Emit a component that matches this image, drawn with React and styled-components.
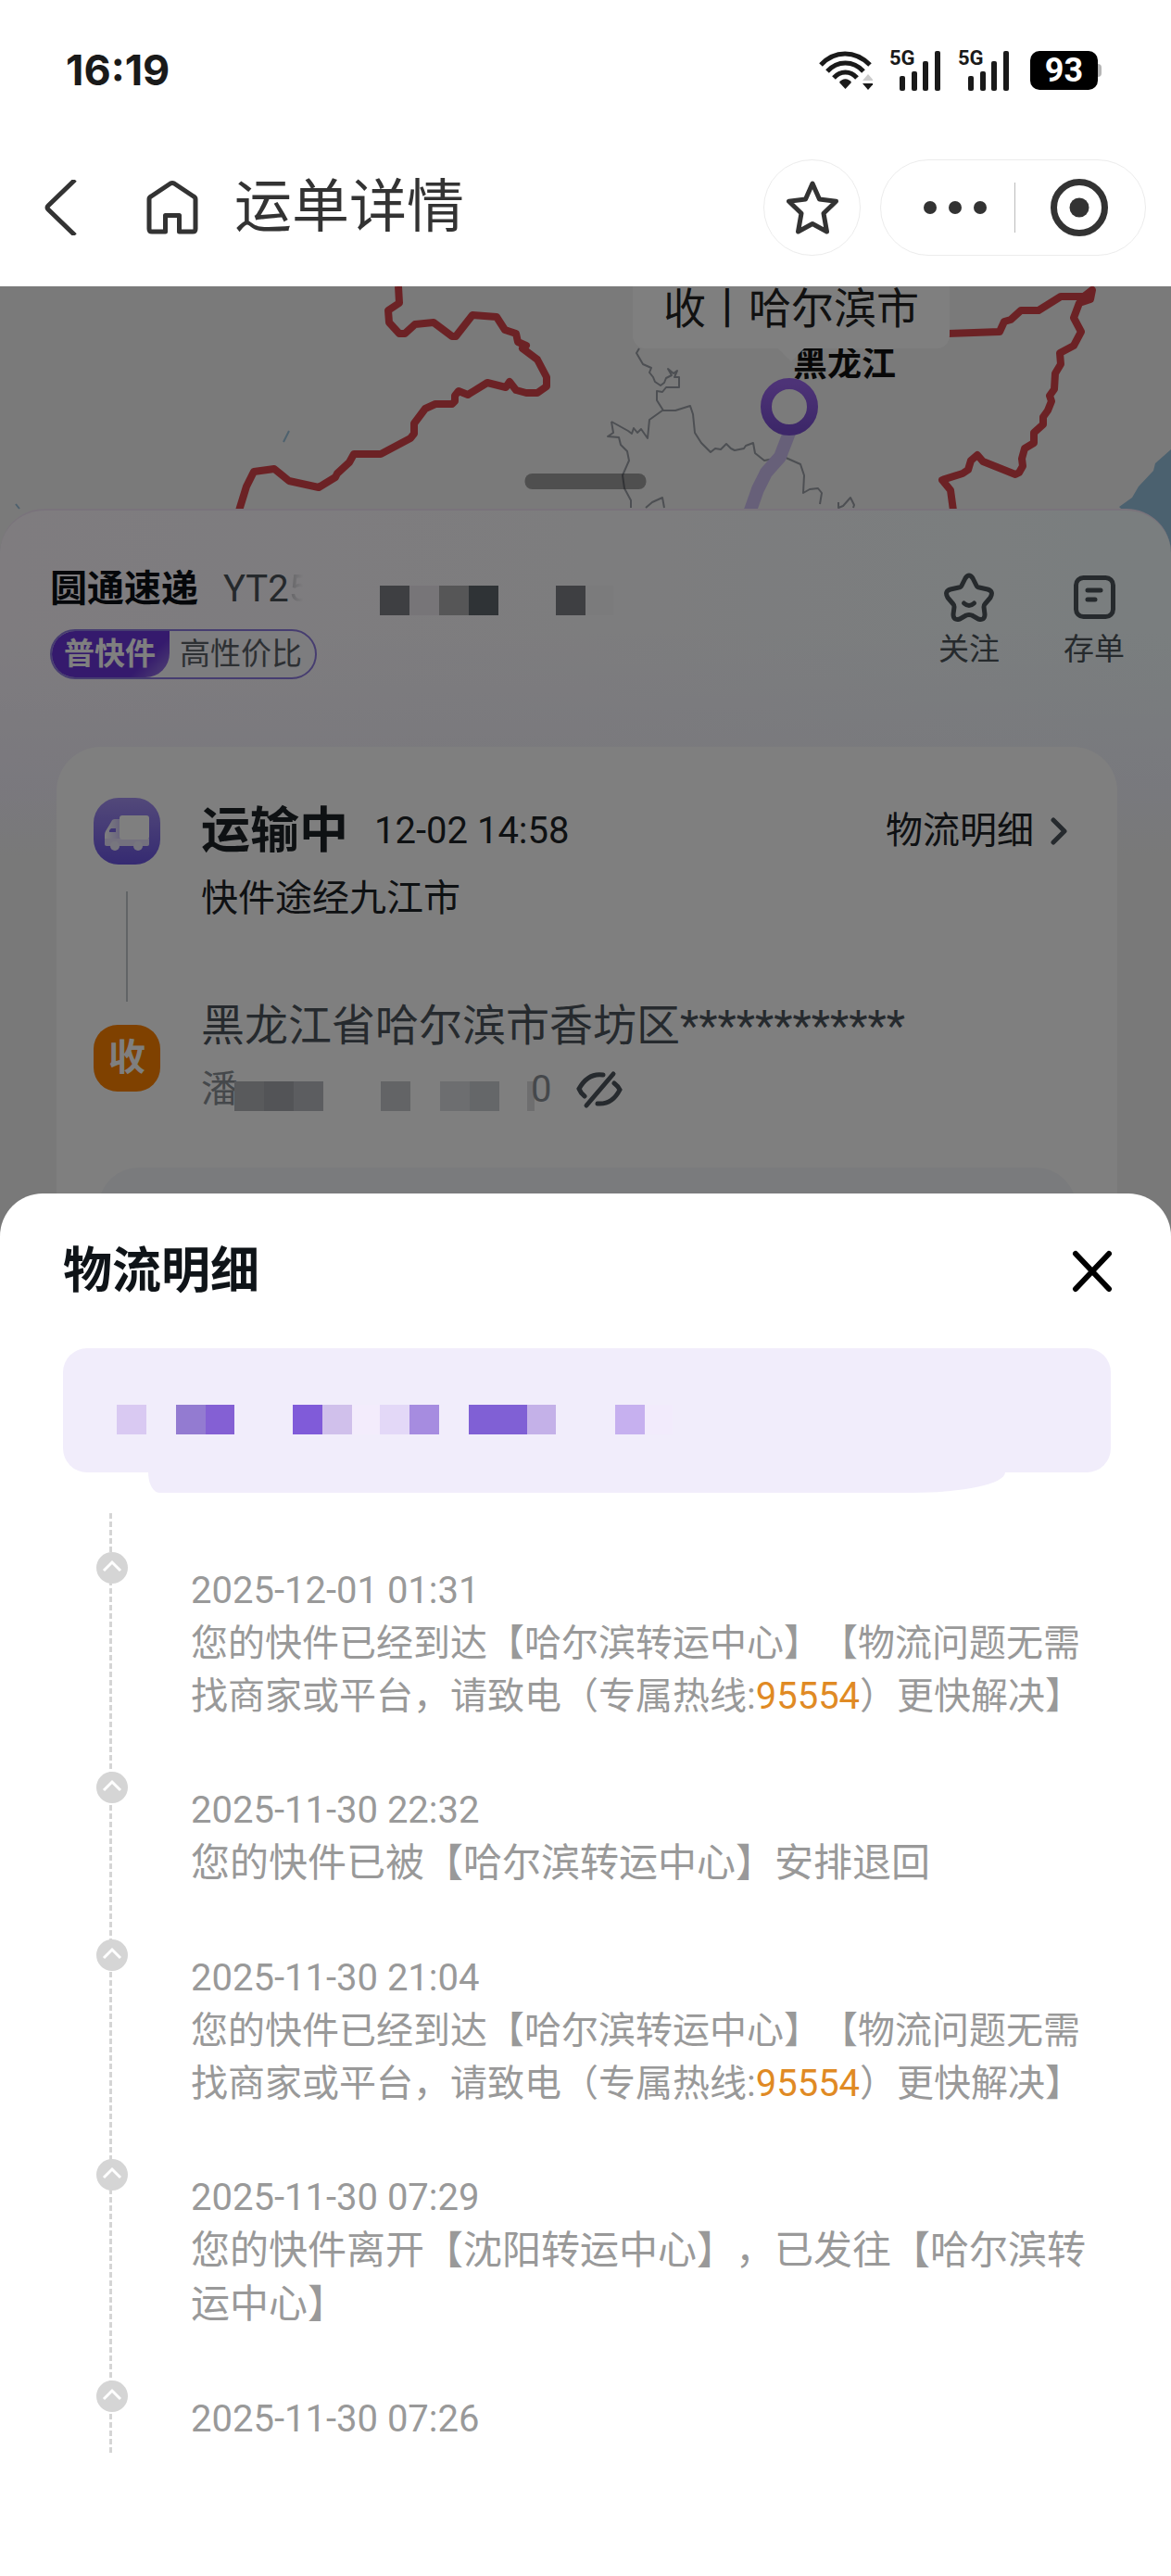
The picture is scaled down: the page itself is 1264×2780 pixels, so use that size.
// App.jsx
import React, { useState } from 'react';
import styled, { createGlobalStyle } from 'styled-components';

const GlobalStyle = createGlobalStyle`
  * {
    box-sizing: border-box;
  }

  body {
    margin: 0;
    background: #fff;
    font-family: Roboto, "Noto Sans CJK SC", sans-serif;
    text-spacing-trim: space-all;
  }

  button {
    padding: 0;
    border: none;
    background: none;
    color: inherit;
    font: inherit;
    cursor: pointer;
  }

  svg {
    display: block;
    flex: none;
  }
`;

const Page = styled.div`
  display: flex;
  flex-direction: column;
  min-height: 100vh;
`;

// Status bar
const StatusBar = styled.div`
  display: flex;
  align-items: center;
  justify-content: space-between;
  padding: 46px 75px 26px 71px;
  color: #1a1a1a;
`;

const Clock = styled.time`
  font-family: Inter, sans-serif;
  font-size: 45px;
  font-weight: 700;
  line-height: 60px;
`;

const StatusIcons = styled.div`
  display: flex;
  align-items: center;
  gap: 18px;
`;

const Signal = styled.div`
  display: flex;
  position: relative;
  padding-left: 10px;
`;

const NetworkType = styled.span`
  position: absolute;
  top: -4px;
  left: 0;
  font-size: 22px;
  font-weight: 700;
  line-height: 26px;
`;

const Battery = styled.div`
  display: flex;
  align-items: center;
  margin-left: 4px;

  &::after {
    content: '';
    width: 4px;
    height: 14px;
    border-radius: 0 4px 4px 0;
    background: #b5b5b5;
  }
`;

const BatteryLevel = styled.span`
  width: 73px;
  border-radius: 10px;
  background: #000;
  color: #fff;
  font-size: 36px;
  font-weight: 700;
  line-height: 42px;
  text-align: center;
`;

// Navigation bar
const NavBar = styled.header`
  display: flex;
  align-items: center;
  padding: 40px 27px 33px 48px;
  color: #333;
`;

const HomeButton = styled.button`
  margin: 0 39px 0 74px;
`;

const PageTitle = styled.h1`
  flex: 1;
  margin: 0;
  font-size: 62px;
  font-weight: 400;
  line-height: 104px;
`;

const StarButton = styled.button`
  display: flex;
  align-items: center;
  justify-content: center;
  width: 105px;
  height: 104px;
  margin-right: 21px;
  border: 1px solid #ececec;
  border-radius: 52px;
`;

const Capsule = styled.div`
  display: flex;
  align-items: center;
  justify-content: space-between;
  width: 287px;
  height: 104px;
  padding: 0 40px 0 46px;
  border: 1px solid #ececec;
  border-radius: 52px;
`;

const CapsuleDivider = styled.span`
  width: 1px;
  height: 54px;
  margin-right: 8px;
  background: #bbb;
`;

// Dimmed page behind the bottom sheet
const Stage = styled.main`
  position: relative;
  overflow: hidden;
`;

const Backdrop = styled.div`
  position: absolute;
  inset: 0;
  background: rgba(0, 0, 0, 0.5);
`;

const Map = styled.section`
  position: relative;
  height: 292px;
  overflow: hidden;
  background: #f4f4f4;
`;

const Callout = styled.div`
  position: absolute;
  top: 0;
  left: 683px;
  padding: 0 33px 19px;
  border-radius: 0 0 14px 14px;
  background: #fff;
  color: #222;
  font-size: 46px;
  line-height: 48px;

  &::after {
    content: '';
    position: absolute;
    top: 100%;
    left: 50%;
    border: 14px solid transparent;
    border-top-color: #fff;
    transform: translateX(-50%);
  }
`;

const ProvinceName = styled.span`
  position: absolute;
  top: 61px;
  left: 856px;
  color: #111;
  font-size: 37px;
  font-weight: 700;
  line-height: 48px;
`;

const DragHandle = styled.div`
  position: absolute;
  top: 202px;
  left: 50%;
  width: 131px;
  height: 17px;
  border-radius: 8px;
  background: rgba(0, 0, 0, 0.35);
  transform: translateX(-50%);
`;

const Waybill = styled.section`
  position: relative;
  margin-top: -52px;
  border-top: 2px solid #f3e6f7;
  border-radius: 48px 48px 0 0;
  background:
    linear-gradient(to bottom, rgba(242, 242, 242, 0) 130px, rgba(240, 238, 250, 0.7) 300px, #f2f2f2 378px),
    linear-gradient(to right, #fef9ff, #fbfafd 50%, #f4fdfe);
`;

const WaybillHead = styled.div`
  display: flex;
  align-items: flex-start;
  justify-content: space-between;
  padding: 61px 50px 73px 54px;
`;

const CarrierRow = styled.div`
  display: flex;
  align-items: flex-start;
  margin-bottom: 15px;
  line-height: 48px;
`;

const Carrier = styled.h2`
  margin: 0 27px 0 0;
  color: #0a0f14;
  font-size: 40px;
  font-weight: 700;
`;

const WaybillNo = styled.span`
  margin-right: 76px;
  color: #4a5258;
  font-size: 40px;
`;

const FadedDigit = styled.span`
  opacity: 0.3;
  mask-image: linear-gradient(to right, #000, transparent 70%);
`;

const Tag = styled.div`
  display: flex;
  width: fit-content;
  overflow: hidden;
  border: 2px solid #8d7ae0;
  border-radius: 27px;
  background: #fbfaff;
  color: #5a6066;
  font-size: 33px;
  line-height: 50px;
`;

const TagName = styled.strong`
  padding: 0 15px 0 13px;
  border-radius: 0 0 26px 0;
  background: linear-gradient(135deg, #6a35da 75%, #a58ae8 100%);
  color: #fff;
  font-weight: 700;
`;

const TagNote = styled.span`
  padding: 0 14px 0 11px;
`;

const Actions = styled.div`
  display: flex;
  gap: 69px;
  margin-top: 5px;
`;

const ActionButton = styled.button`
  display: flex;
  flex-direction: column;
  align-items: center;
  gap: 10px;
  color: #4d555a;
  font-size: 33px;
  line-height: 40px;
`;

const Card = styled.article`
  margin: 0 58px 0 61px;
  padding: 55px 44px 0 40px;
  border-radius: 48px 48px 0 0;
  background: #fff;
`;

const Stop = styled.div`
  display: grid;
  grid-template-columns: 72px 1fr;
  column-gap: 44px;
  padding-right: 9px;
`;

const StopRail = styled.div`
  display: flex;
  flex-direction: column;
  align-items: center;

  &::after {
    content: '';
    display: ${(props) => (props.$line ? 'block' : 'none')};
    width: 2px;
    height: 119px;
    margin-top: 29px;
    background: #c3c8cd;
  }
`;

const ReceiveBadge = styled.span`
  width: 72px;
  margin-top: 25px;
  border-radius: 26px;
  background: #ff8200;
  color: #fff;
  font-size: 40px;
  font-weight: 700;
  line-height: 72px;
  text-align: center;
`;

const StateRow = styled.div`
  display: flex;
  align-items: center;
  margin-bottom: 13px;
  color: #1d2226;
  line-height: 72px;
`;

const State = styled.h3`
  margin: 0;
  font-size: 53px;
  font-weight: 700;
`;

const StateTime = styled.time`
  flex: 1;
  margin-left: 28px;
  font-size: 40px;
`;

const DetailLink = styled.a`
  display: flex;
  align-items: center;
  gap: 18px;
  color: inherit;
  font-size: 40px;
  text-decoration: none;
`;

const StateText = styled.p`
  margin: 0;
  color: #1d2226;
  font-size: 40px;
  line-height: 48px;
`;

const Address = styled.p`
  margin: 0 0 19px;
  color: #4d555c;
  font-size: 47px;
  line-height: 52px;
`;

const Receiver = styled.div`
  display: flex;
  align-items: center;
  color: #8b9197;
  font-size: 40px;
  line-height: 48px;

  button {
    margin-left: 27px;
    color: #4d555c;
  }
`;

const ExtraPanel = styled.div`
  height: 78px;
  margin: 60px 0 0 5px;
  border-radius: 44px 44px 0 0;
  background: #f5f7fa;
`;

// Bottom sheet with the tracking history
const Sheet = styled.section`
  position: relative;
  flex: 1;
  margin-top: -50px;
  border-radius: 46px 46px 0 0;
  background: #fff;
`;

const SheetHead = styled.div`
  display: flex;
  align-items: center;
  justify-content: space-between;
  padding: 49px 63px 48px 68px;
`;

const SheetTitle = styled.h2`
  margin: 0;
  color: #0f1418;
  font-size: 53px;
  font-weight: 700;
  line-height: 70px;
`;

const Notice = styled.div`
  position: relative;
  margin: 0 65px 44px 68px;
  padding: 61px 58px 41px;
  border-radius: 26px;
  background: #f1edfb;

  &::after {
    content: '';
    position: absolute;
    top: 100%;
    right: 114px;
    left: 92px;
    height: 22px;
    border-radius: 0 0 100px 12px / 0 0 22px 22px;
    background: inherit;
  }
`;

const History = styled.ol`
  margin: 0;
  padding: 42px 68px 0 104px;
  list-style: none;
  background: repeating-linear-gradient(to bottom, #d5d5d5 0 6px, transparent 6px 9px) 118px 0 / 3px 100% no-repeat;
`;

const Entry = styled.li`
  display: grid;
  grid-template-columns: 34px 1fr;
  column-gap: 68px;
  padding-bottom: 53px;

  &:last-child {
    padding-bottom: 8px;
  }
`;

const EntryBody = styled.div`
  padding-top: 14px;
  color: #999;
`;

const EntryTime = styled.time`
  display: block;
  font-size: 40px;
  line-height: 56px;
`;

const EntryText = styled.p`
  margin: 0;
  font-size: ${(props) => (props.$compact ? '40px' : '42px')};
  line-height: ${(props) => (props.$compact ? '57px' : '58px')};
`;

const Hotline = styled.a`
  color: #e08a24;
  text-decoration: none;
`;

const WifiIcon = () => (
  <svg width="58" height="42" viewBox="0 0 58 42" fill="none" stroke="#1a1a1a" strokeWidth="5">
    <path d="M2 15C17-1 39-1 55 15" />
    <path d="M9 22C20 10 37 10 48 22" />
    <path d="M16 29C23 21 34 21 41 29" />
    <path d="M22 34c3-5 10-5 13 0l-6.500 7z" fill="#1a1a1a" stroke="none" />
    <path d="M47 32l6-7 6 7z" fill="#ccc" stroke="none" />
    <path d="M47 35h12l-6 7z" fill="#1a1a1a" stroke="none" />
  </svg>
);

const SignalIcon = () => (
  <Signal>
    <NetworkType>5G</NetworkType>
    <svg width="46" height="44" viewBox="0 0 46 44" fill="#1a1a1a">
      <rect x="1" y="28" width="6" height="16" rx="2" />
      <rect x="14" y="23" width="6" height="21" rx="2" />
      <rect x="26" y="12" width="6" height="32" rx="2" />
      <rect x="39" y="1" width="6" height="43" rx="2" />
    </svg>
  </Signal>
);

const BackIcon = () => (
  <svg width="36" height="60" viewBox="0 0 36 60" fill="none" stroke="currentColor" strokeWidth="5">
    <path d="M33 0L4 28q-2 2 0 4L33 60" />
  </svg>
);

const HomeIcon = () => (
  <svg width="56" height="60" viewBox="0 0 56 60" fill="none" stroke="currentColor" strokeWidth="5" strokeLinejoin="round">
    <path d="M20.500 56H6q-3 0-3-3V21q0-2 2-3L26 4q2-1 4 0l21 14q2 1 2 3v32q0 3-3 3H35.500V38.500h-15z" />
    <path d="M24 56h8" stroke="#fff" strokeWidth="6" />
  </svg>
);

const StarIcon = () => (
  <svg width="56" height="60" viewBox="0 0 56 60" fill="none" stroke="currentColor" strokeWidth="5" strokeLinejoin="round">
    <path d="M28 4l7.500 17 18 2.200-13.500 13L43.500 56 28 47.500 12.500 56 16 36.200 2.500 23.200l18-2.200z" />
  </svg>
);

const MoreIcon = () => (
  <svg width="68" height="14" viewBox="0 0 68 14" fill="currentColor">
    <circle cx="7" cy="7" r="7" />
    <circle cx="34" cy="7" r="7" />
    <circle cx="61" cy="7" r="7" />
  </svg>
);

const TargetIcon = () => (
  <svg width="62" height="62" viewBox="0 0 62 62">
    <circle cx="31" cy="31" r="27.500" fill="none" stroke="currentColor" strokeWidth="7" />
    <circle cx="31" cy="31" r="10.500" fill="currentColor" />
  </svg>
);

const SmileStarIcon = () => (
  <svg width="54" height="54" viewBox="0 0 54 54" fill="none" stroke="currentColor" strokeWidth="5" strokeLinecap="round" strokeLinejoin="round">
    <path d="M23 7q4-6 8 0l4 8q1 2 3 2l9 2q7 2 3 9l-6 7q-1 1-1 3l1 8q0 7-7 5l-7-4q-3-1-6 0l-7 4q-7 2-7-5l1-8q0-2-1-3l-6-7q-4-7 3-9l9-2q2 0 3-2z" />
    <path d="M21.500 34q5.500 5 11 0" />
  </svg>
);

const SaveIcon = () => (
  <svg width="54" height="54" viewBox="0 0 54 54" fill="none" stroke="currentColor" strokeWidth="5" strokeLinecap="round">
    <rect x="7.500" y="6.500" width="40" height="42" rx="8" />
    <path d="M20 20h14M20 30h8" />
  </svg>
);

const TruckIcon = () => (
  <svg width="72" height="72" viewBox="0 0 72 72">
    <defs>
      <linearGradient id="truckFill" x1="0" y1="0" x2="0" y2="1">
        <stop offset="0" stopColor="#a592f4" />
        <stop offset="1" stopColor="#6b55e4" />
      </linearGradient>
      <linearGradient id="cabFill" x1="0" y1="0" x2="1" y2="0">
        <stop offset="0" stopColor="#fff" />
        <stop offset="1" stopColor="#cfc6fa" />
      </linearGradient>
    </defs>
    <rect width="72" height="72" rx="27" fill="url(#truckFill)" />
    <path d="M28 23h-5q-3 0-4 3l-6 10q-1 2-1 4v9q0 2 2 2h15z" fill="url(#cabFill)" />
    <path d="M17 35l2-2h5v4h-7z" fill="#7f6aea" />
    <path d="M12 44h48v6q0 2-2 2H14q-2 0-2-2z" fill="#e8e3fc" />
    <rect x="28" y="19" width="32" height="26" rx="3" fill="#fff" />
    <circle cx="23" cy="52" r="5" fill="#efecfd" />
    <circle cx="48" cy="52" r="5" fill="#efecfd" />
  </svg>
);

const ChevronIcon = () => (
  <svg width="19" height="30" viewBox="0 0 19 30" fill="none" stroke="#4d555c" strokeWidth="5" strokeLinecap="round" strokeLinejoin="round">
    <path d="M3 3l12 12L3 27" />
  </svg>
);

const HiddenIcon = () => (
  <svg width="50" height="42" viewBox="0 0 50 42" fill="none" stroke="currentColor" strokeWidth="5" strokeLinecap="round">
    <path d="M29 5C16 3 8 11 3 20q2 5 6 8" />
    <path d="M11 38L40 4" />
    <path d="M41 14q4 3 6 7c-5 10-13 16-24 15" />
  </svg>
);

const CloseIcon = () => (
  <svg width="44" height="46" viewBox="0 0 44 46" fill="none" stroke="#000" strokeWidth="6" strokeLinecap="round">
    <path d="M4 4l36 38M40 4L4 42" />
  </svg>
);

const EntryIcon = () => (
  <svg width="34" height="34" viewBox="0 0 34 34" fill="none">
    <circle cx="17" cy="17" r="17" fill="#d5d5d5" />
    <path d="M8 20l9-9 9 9" stroke="#fff" strokeWidth="3" />
  </svg>
);

// Pixelated cells over private data: [x, width, colour]
const numberCells = [
  [0, 32, '#7d7e85'], [32, 32, '#efebf0'], [64, 32, '#acacaf'], [96, 32, '#5f666c'],
  [190, 32, '#7d7e84'], [222, 30, '#f7f6f9'],
];
const receiverCells = [
  [0, 32, '#b2b4b8'], [32, 32, '#a7a9ae'], [64, 32, '#b8bac0'],
  [158, 32, '#c6c9cd'], [222, 32, '#dadce1'], [254, 32, '#cbced3'], [316, 8, '#dcdcdf'],
];
const noticeCells = [
  [0, 32, '#d9c9f2'], [64, 32, '#937bd1'], [96, 31, '#8460d4'],
  [190, 32, '#805bd9'], [222, 32, '#d0c0eb'], [254, 30, '#f3ecfc'],
  [284, 32, '#e3d8f7'], [316, 32, '#a68ce0'],
  [380, 63, '#8060d5'], [443, 31, '#c4b1e8'], [538, 32, '#c6b0ef'], [570, 30, '#f2ebfc'],
];

const MosaicSvg = styled.svg`
  overflow: visible;
  margin-left: ${(props) => (props.$overlap ? '-4px' : '0')};
`;

const Mosaic = ({ cells, width, offset = 0, overlap }) => (
  <MosaicSvg width={width} height={32 + offset} $overlap={overlap} aria-hidden="true">
    {cells.map(([x, w, color]) => (
      <rect key={x} x={x} y={offset} width={w} height="32" fill={color} />
    ))}
  </MosaicSvg>
);

const MapDrawing = () => (
  <svg width="1264" height="292" viewBox="0 0 1264 292" fill="none" strokeLinejoin="round">
    <defs>
      <linearGradient id="pinStroke" x1="0" y1="0" x2="0" y2="1">
        <stop offset="0" stopColor="#9b66ee" />
        <stop offset="1" stopColor="#7a4fd2" />
      </linearGradient>
    </defs>
    {/* water */}
    <path d="M1264 176l-17 15-2 8-16 17-7 12-14 10 56 54z" fill="#97c2de" />
    <path d="M306 168l6-12M17 235l4 5" stroke="#9cc2dc" strokeWidth="2" />
    {/* city borders */}
    <g stroke="#9a9fa6" strokeWidth="2">
      <path d="M690 67l-3 5 7 12 9 4-2 5 4 5 2 5 6 4 4-3 2-5 6-3-4-7 6 5 4-3-3 7 5 0v11h-14l-4 5-6-1v10l7 11" />
      <path d="M660 146l18 10 4 3 2-6 4 5 4-4 7 10 2-20 14-10 14 0 16-5 3 9 2 20 7 11 10 10 5-4 6 1 6-6 5 5 4 2 10-2 2-3 8-3 2 11 10 8 21-4 18 8 4 12-1 19 7-4 9-1 4 5-2 12" />
      <path d="M660 146l2 12-6 4 12 1 2 8 7 7 2 10-7 16 2 14 7 13v8M697 239l7-6 11-5 2 11M905 233l0 6 5-2 8-9 4 8-1 3" />
    </g>
    {/* route */}
    <path d="M852 158l-10 26-15 17-9 18-12 34" stroke="#cfc0f2" strokeWidth="14" />
    {/* national border */}
    <g stroke="#d9454a" strokeWidth="8">
      <path d="M430 0l1 18-12 8 1 13 11 12h6l11-10 20-2 20 15h4l18-23 26 2 9 14 12 4 2 9 9 4-4 3 16 12 10 19v10l-10 7h-12l-11-3-7-9-4 6-20-5-21 13-10-4-4 5v6l-3 3h-18l-11 5-12 16v11l-4 5-32 17h-29l-5 9-13 12-2 4-18 11-32-7-16-13-22 3-8 16-8 26" />
      <path d="M1023 51l56-2 5-11 7-2 11-10h19l24-15h25l9-7-2 10-12 4-6 16 8 15-8 15-15 8 1 12-6 10-1 17-5 7 2 6-4 10-5 7v8l-10 9v11l-10 6-3 11 1 8-4 7-4 2-35-14-6-7-7 6-3 10-6 4-22 7 9 11 3 22" />
    </g>
    <circle cx="852" cy="130" r="25" fill="#f6f6f6" stroke="url(#pinStroke)" strokeWidth="12" />
  </svg>
);

const entries = [
  { time: '2025-12-01 01:31', before: '您的快件已经到达【哈尔滨转运中心】【物流问题无需找商家或平台，请致电（专属热线:', phone: '95554', after: '）更快解决】' },
  { time: '2025-11-30 22:32', before: '您的快件已被【哈尔滨转运中心】安排退回' },
  { time: '2025-11-30 21:04', before: '您的快件已经到达【哈尔滨转运中心】【物流问题无需找商家或平台，请致电（专属热线:', phone: '95554', after: '）更快解决】' },
  { time: '2025-11-30 07:29', before: '您的快件离开【沈阳转运中心】，已发往【哈尔滨转运中心】' },
  { time: '2025-11-30 07:26' },
];

const App = () => {
  const [sheetOpen, setSheetOpen] = useState(true);

  return (
    <Page>
      <GlobalStyle />

      <StatusBar>
        <Clock>16:19</Clock>
        <StatusIcons>
          <WifiIcon />
          <SignalIcon />
          <SignalIcon />
          <Battery>
            <BatteryLevel>93</BatteryLevel>
          </Battery>
        </StatusIcons>
      </StatusBar>

      <NavBar>
        <button type="button" aria-label="返回"><BackIcon /></button>
        <HomeButton type="button" aria-label="首页"><HomeIcon /></HomeButton>
        <PageTitle>运单详情</PageTitle>
        <StarButton type="button" aria-label="收藏"><StarIcon /></StarButton>
        <Capsule>
          <button type="button" aria-label="更多"><MoreIcon /></button>
          <CapsuleDivider />
          <button type="button" aria-label="关闭小程序"><TargetIcon /></button>
        </Capsule>
      </NavBar>

      <Stage>
        <Map>
          <MapDrawing />
          <ProvinceName>黑龙江</ProvinceName>
          <Callout>收丨哈尔滨市</Callout>
          <DragHandle />
        </Map>

        <Waybill>
          <WaybillHead>
            <div>
              <CarrierRow>
                <Carrier>圆通速递</Carrier>
                <WaybillNo>YT2<FadedDigit>5</FadedDigit></WaybillNo>
                <Mosaic cells={numberCells} width={252} offset={20} />
              </CarrierRow>
              <Tag>
                <TagName>普快件</TagName>
                <TagNote>高性价比</TagNote>
              </Tag>
            </div>
            <Actions>
              <ActionButton type="button"><SmileStarIcon />关注</ActionButton>
              <ActionButton type="button"><SaveIcon />存单</ActionButton>
            </Actions>
          </WaybillHead>

          <Card>
            <Stop>
              <StopRail $line><TruckIcon /></StopRail>
              <div>
                <StateRow>
                  <State>运输中</State>
                  <StateTime>12-02 14:58</StateTime>
                  <DetailLink href="#history" onClick={() => setSheetOpen(true)}>
                    物流明细<ChevronIcon />
                  </DetailLink>
                </StateRow>
                <StateText>快件途经九江市</StateText>
              </div>
            </Stop>
            <Stop>
              <StopRail><ReceiveBadge>收</ReceiveBadge></StopRail>
              <div>
                <Address>黑龙江省哈尔滨市香坊区************</Address>
                <Receiver>
                  <span>潘</span>
                  <Mosaic cells={receiverCells} width={320} offset={14} overlap />
                  <span>0</span>
                  <button type="button" aria-label="显示收件人"><HiddenIcon /></button>
                </Receiver>
              </div>
            </Stop>
            <ExtraPanel />
          </Card>
        </Waybill>
        {sheetOpen && <Backdrop />}
      </Stage>

      {sheetOpen && (
        <Sheet id="history">
          <SheetHead>
            <SheetTitle>物流明细</SheetTitle>
            <button type="button" aria-label="关闭" onClick={() => setSheetOpen(false)}>
              <CloseIcon />
            </button>
          </SheetHead>
          <Notice>
            <Mosaic cells={noticeCells} width={600} />
          </Notice>
          <History>
            {entries.map((entry) => (
              <Entry key={entry.time}>
                <EntryIcon />
                <EntryBody>
                  <EntryTime>{entry.time}</EntryTime>
                  {entry.before && (
                    <EntryText $compact={Boolean(entry.phone)}>
                      {entry.before}
                      {entry.phone && <Hotline href={`tel:${entry.phone}`}>{entry.phone}</Hotline>}
                      {entry.after}
                    </EntryText>
                  )}
                </EntryBody>
              </Entry>
            ))}
          </History>
        </Sheet>
      )}
    </Page>
  );
};

export default App;
